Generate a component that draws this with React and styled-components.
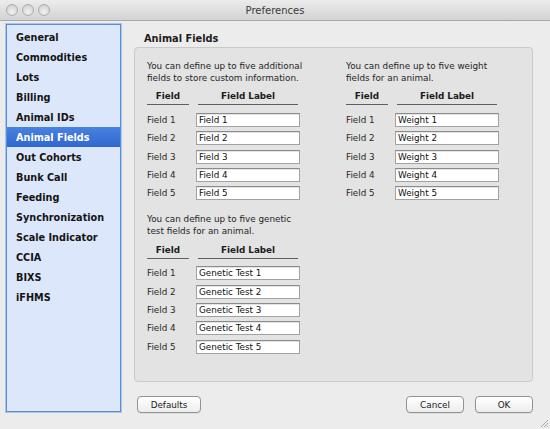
import styled, { createGlobalStyle } from 'styled-components';

const GlobalStyle = createGlobalStyle`
  html, body {
    margin: 0;
    padding: 0;
    background: #ececec;
  }
  * {
    box-sizing: border-box;
  }
`;

const sections = [
  'General',
  'Commodities',
  'Lots',
  'Billing',
  'Animal IDs',
  'Animal Fields',
  'Out Cohorts',
  'Bunk Call',
  'Feeding',
  'Synchronization',
  'Scale Indicator',
  'CCIA',
  'BIXS',
  'iFHMS',
];

const App = () => {
  return (
    <Window>
      <GlobalStyle />
      <TitleBar>
        <Lights>
          <Light />
          <Light />
          <Light />
        </Lights>
        <Title>Preferences</Title>
      </TitleBar>
      <Body>
        <Sidebar>
          {sections.map((s) => (
            <NavItem key={s} active={s === 'Animal Fields'}>
              {s}
            </NavItem>
          ))}
        </Sidebar>
        <Main>
          <Heading>Animal Fields</Heading>
          <Panel>
            <Columns>
              <Stack>
                <FieldBlock
                  text={['You can define up to five additional', 'fields to store custom information.']}
                  prefix="Field"
                />
                <Spacer />
                <FieldBlock
                  text={['You can define up to five genetic', 'test fields for an animal.']}
                  prefix="Genetic Test"
                />
              </Stack>
              <Stack>
                <FieldBlock
                  text={['You can define up to five weight', 'fields for an animal.']}
                  prefix="Weight"
                />
              </Stack>
            </Columns>
          </Panel>
          <Footer>
            <Button width={64}>Defaults</Button>
            <RightButtons>
              <Button width={58}>Cancel</Button>
              <Button width={58}>OK</Button>
            </RightButtons>
          </Footer>
        </Main>
      </Body>
      <Grip width="10" height="10" viewBox="0 0 10 10">
        <path d="M9 2 L2 9 M9 5 L5 9 M9 8 L8 9" stroke="#9a9a9a" strokeWidth="0.8" />
      </Grip>
    </Window>
  );
};

const FieldBlock = ({ text, prefix }) => (
  <Block>
    <Description>
      {text[0]}
      <br />
      {text[1]}
    </Description>
    <Grid>
      <ColHead>Field</ColHead>
      <ColHead inset>Field Label</ColHead>
      {[1, 2, 3, 4, 5].map((n) => (
        <Row key={n}>
          <RowLabel>Field {n}</RowLabel>
          <TextInput defaultValue={`${prefix} ${n}`} />
        </Row>
      ))}
    </Grid>
  </Block>
);

const Window = styled.div`
  position: relative;
  width: 550px;
  height: 429px;
  background: #ececec;
  font-family: 'DejaVu Sans', Verdana, sans-serif;
  color: #1c1c1c;
  overflow: hidden;
`;

const TitleBar = styled.div`
  position: relative;
  height: 21px;
  display: flex;
  align-items: center;
  justify-content: center;
  background: linear-gradient(#ececec, #d3d3d3);
  border-bottom: 1px solid #a8a8a8;
`;

const Lights = styled.div`
  position: absolute;
  left: 6px;
  top: 4px;
  display: flex;
  gap: 4px;
`;

const Light = styled.span`
  width: 12px;
  height: 12px;
  border-radius: 50%;
  background: radial-gradient(circle at 50% 70%, #f2f2f2, #c9c9c9);
  border: 1px solid #adadad;
`;

const Title = styled.div`
  font-size: 10px;
  color: #3a3a3a;
`;

const Body = styled.div`
  display: flex;
  padding: 3px 17px 0 6px;
  gap: 13px;
`;

const Sidebar = styled.div`
  width: 115px;
  height: 388px;
  background: #dde7fb;
  border: 1px solid #5a8ed2;
  box-shadow: 0 0 0 1px #a9c4ea;
  padding-top: 2px;
`;

const NavItem = styled.div`
  height: 20px;
  display: flex;
  align-items: center;
  padding-left: 9px;
  font-size: 9.7px;
  font-weight: bold;
  color: ${(p) => (p.active ? '#ffffff' : '#141414')};
  background: ${(p) => (p.active ? 'linear-gradient(#4a82e0, #2f67cf)' : 'transparent')};
`;

const Main = styled.div`
  flex: 1;
  display: flex;
  flex-direction: column;
`;

const Heading = styled.div`
  font-size: 9.8px;
  font-weight: bold;
  line-height: 12px;
  margin: 9px 0 2px 10px;
`;

const Panel = styled.div`
  height: 335px;
  background: #e3e3e3;
  border: 1px solid #c9c9c9;
  border-radius: 4px;
  padding: 13px 12px 0 12px;
`;

const Columns = styled.div`
  display: grid;
  grid-template-columns: 154px 154px;
  column-gap: 45px;
`;

const Stack = styled.div`
  display: flex;
  flex-direction: column;
`;

const Spacer = styled.div`
  height: 14px;
`;

const Block = styled.div`
  display: flex;
  flex-direction: column;
`;

const Description = styled.div`
  font-size: 8.8px;
  line-height: 11.7px;
  color: #1f1f1f;
  white-space: nowrap;
  margin-bottom: 6px;
`;

const Grid = styled.div`
  display: grid;
  grid-template-columns: 42px 104px;
  column-gap: 7px;
  row-gap: 4.4px;
`;

const ColHead = styled.div`
  font-size: 8.8px;
  font-weight: bold;
  text-align: center;
  line-height: 12px;
  padding-bottom: 2px;
  border-bottom: 1px solid #5e5e5e;
  margin: ${(p) => (p.inset ? '0 2px 3px 2px' : '0 0 3px 0')};
`;

const Row = styled.div`
  display: contents;
`;

const RowLabel = styled.div`
  font-size: 8.8px;
  color: #2a2a2a;
  display: flex;
  align-items: center;
  height: 14px;
`;

const TextInput = styled.input`
  height: 14px;
  width: 104px;
  margin: 0;
  padding: 0 2px;
  font-family: 'DejaVu Sans', Verdana, sans-serif;
  font-size: 8.8px;
  color: #111;
  background: #fff;
  border: 1px solid #a2a2a2;
  border-top-color: #8a8a8a;
  box-shadow: inset 0 1px 0 #e4e4e4;
  outline: none;
`;

const Footer = styled.div`
  display: flex;
  justify-content: space-between;
  margin-top: 14px;
  padding-left: 3px;
`;

const RightButtons = styled.div`
  display: flex;
  gap: 11px;
`;

const Button = styled.button`
  width: ${(p) => p.width}px;
  height: 17px;
  padding: 0;
  font-family: 'DejaVu Sans', Verdana, sans-serif;
  font-size: 8.8px;
  color: #1a1a1a;
  background: linear-gradient(#ffffff, #ededed);
  border: 1px solid #929292;
  border-radius: 4px;
  box-shadow: 0 1px 0 rgba(0, 0, 0, 0.06);
`;

const Grip = styled.svg`
  position: absolute;
  right: 1px;
  bottom: 1px;
`;

export default App;
